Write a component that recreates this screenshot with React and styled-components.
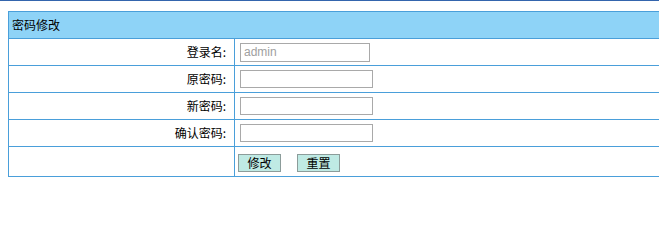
import styled, { createGlobalStyle } from "styled-components";

const GlobalStyle = createGlobalStyle`
  html, body {
    margin: 0;
    padding: 0;
    background: #ffffff;
    overflow: hidden;
  }
  body {
    font-family: "Noto Sans CJK SC", "DejaVu Sans", sans-serif;
    font-size: 12px;
    color: #000000;
  }
`;

const fields = [
  { label: "登录名:", name: "loginName", value: "admin", disabled: true },
  { label: "原密码:", name: "oldPassword" },
  { label: "新密码:", name: "newPassword" },
  { label: "确认密码:", name: "confirmPassword" },
];

export default function App() {
  function handleSubmit(event) {
    event.preventDefault();
  }

  return (
    <>
      <GlobalStyle />
      <TopLine />
      <Page>
        <form onSubmit={handleSubmit}>
          <FormTable>
            <tbody>
              <tr>
                <HeaderCell colSpan={2}>密码修改</HeaderCell>
              </tr>
              {fields.map((field) => (
                <tr key={field.name}>
                  <LabelCell>{field.label}</LabelCell>
                  <FieldCell>
                    <StyledInput
                      type={field.disabled ? "text" : "password"}
                      name={field.name}
                      defaultValue={field.value}
                      disabled={field.disabled}
                      $narrow={field.disabled}
                    />
                  </FieldCell>
                </tr>
              ))}
              <tr>
                <LabelCell $tall />
                <FieldCell>
                  <ButtonRow>
                    <StyledButton type="submit">修改</StyledButton>
                    <StyledButton type="reset">重置</StyledButton>
                  </ButtonRow>
                </FieldCell>
              </tr>
            </tbody>
          </FormTable>
        </form>
      </Page>
    </>
  );
}

const TopLine = styled.div`
  height: 1px;
  background: #3465ad;
`;

const Page = styled.div`
  padding: 10px 0 0 8px;
`;

const FormTable = styled.table`
  width: 700px;
  border-collapse: collapse;
  border: 1px solid #4a9fda;
`;

const HeaderCell = styled.td`
  height: 26px;
  padding: 0 0 0 3px;
  background: #8ed3f7;
  border: 1px solid #4a9fda;
  font-size: 12px;
  line-height: 26px;
`;

const LabelCell = styled.td`
  width: 217px;
  height: ${(props) => (props.$tall ? "29px" : "26px")};
  padding: 0 8px 0 0;
  text-align: right;
  border: 1px solid #4a9fda;
  font-size: 12px;
  line-height: 26px;
`;

const FieldCell = styled.td`
  padding: 0 0 0 5px;
  border: 1px solid #4a9fda;
  vertical-align: middle;
`;

const StyledInput = styled.input`
  display: block;
  box-sizing: border-box;
  width: ${(props) => (props.$narrow ? "130px" : "133px")};
  height: ${(props) => (props.$narrow ? "19px" : "18px")};
  margin: 0;
  padding: 0 3px;
  border: 1px solid #a9a9a9;
  background: #ffffff;
  font-family: "Liberation Sans", Arial, sans-serif;
  font-size: 12px;
  color: #000000;
  &:disabled {
    color: #a0a0a0;
    background: #ffffff;
  }
`;

const ButtonRow = styled.div`
  display: flex;
  gap: 16px;
  margin-left: -2px;
  padding-top: 2px;
`;

const StyledButton = styled.button`
  box-sizing: border-box;
  width: 43px;
  height: 18px;
  margin: 0;
  padding: 0;
  border: 1px solid #8c9c9a;
  background: #bfeae4;
  font-family: "Noto Sans CJK SC", sans-serif;
  font-size: 12px;
  line-height: 16px;
  color: #000000;
`;
